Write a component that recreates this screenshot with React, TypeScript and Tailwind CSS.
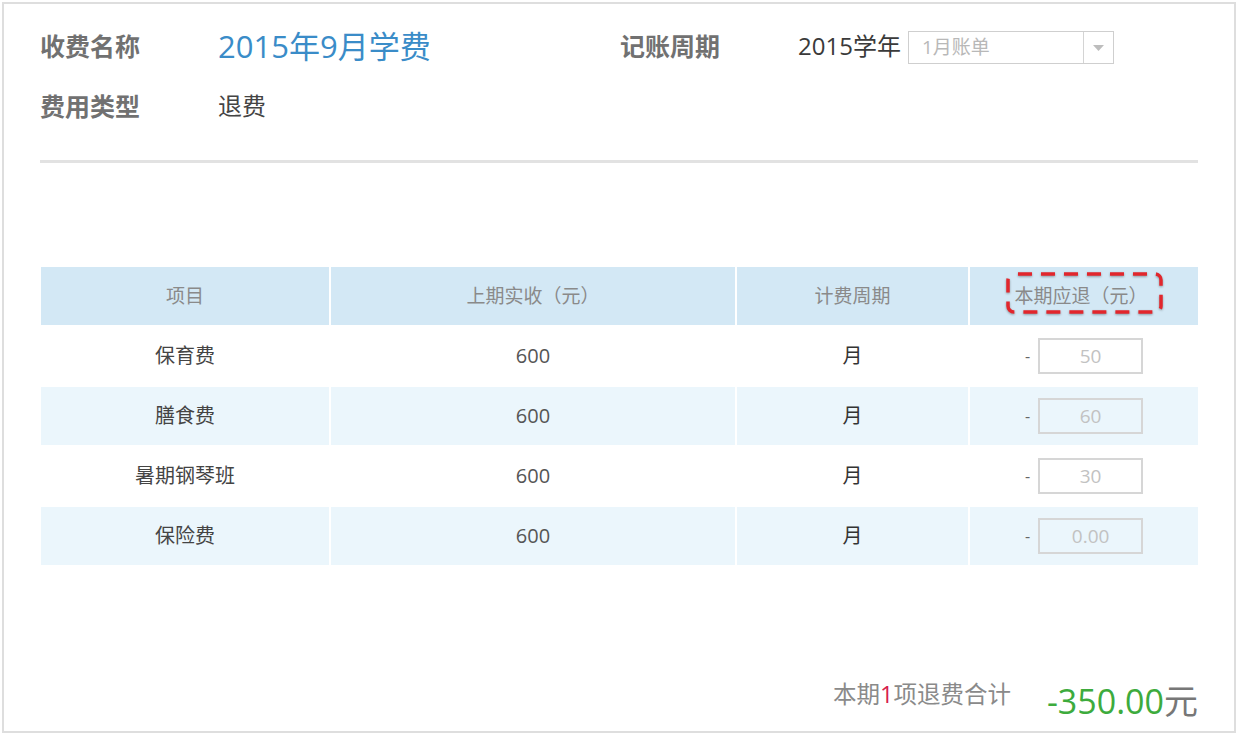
const rows = [
  { name: '保育费', prev: '600', cycle: '月', refund: '50', alt: false },
  { name: '膳食费', prev: '600', cycle: '月', refund: '60', alt: true },
  { name: '暑期钢琴班', prev: '600', cycle: '月', refund: '30', alt: false },
  { name: '保险费', prev: '600', cycle: '月', refund: '0.00', alt: true },
];

export default function App() {
  return (
    <div
      className="w-[1240px] h-[735px] bg-white overflow-hidden"
      style={{ fontFamily: '"Open Sans", "Noto Sans CJK SC", sans-serif' }}
    >
      <div className="ml-[2px] mt-[2px] w-[1234px] h-[731px] border-2 border-[#dedede] px-[36px] pt-[22px] flex flex-col">
        {/* Row 1 */}
        <div className="flex items-center h-[40px]">
          <div className="w-[178px] text-[25px] font-bold text-[#717171] leading-none">收费名称</div>
          <div className="w-[402px] text-[31px] text-[#3a8cc8] leading-none">2015年9月学费</div>
          <div className="w-[178px] text-[25px] font-bold text-[#717171] leading-none">记账周期</div>
          <div className="text-[24px] text-[#3a3a3a] leading-none">2015学年</div>
          <div className="ml-[7px] mt-[3px] w-[206px] h-[33px] border border-[#cfcfcf] flex bg-white">
            <div className="flex-1 pl-[13px] text-[19px] text-[#b8b8b8] flex items-center">1月账单</div>
            <div className="w-[30px] border-l border-[#d4d4d4] flex items-center justify-center">
              <svg width="11" height="6" viewBox="0 0 11 6">
                <path d="M0 0 L11 0 L5.5 6 Z" fill="#bdbdbd" />
              </svg>
            </div>
          </div>
        </div>
        {/* Row 2 */}
        <div className="flex items-center h-[40px] mt-[20px]">
          <div className="w-[178px] text-[25px] font-bold text-[#717171] leading-none">费用类型</div>
          <div className="text-[24px] text-[#444444] leading-none">退费</div>
        </div>
        {/* Divider */}
        <div className="mt-[34px] h-[3px] bg-[#e2e2e2]" />
        {/* Table */}
        <div className="mt-[104px] ml-[1px] grid grid-cols-[288px_404px_231px_228px] gap-[2px]">
          <div className="h-[58px] bg-[#d3e8f5] flex items-center justify-center text-[19px] text-[#8a8a8a]">项目</div>
          <div className="h-[58px] bg-[#d3e8f5] flex items-center justify-center text-[19px] text-[#8a8a8a]">上期实收（元）</div>
          <div className="h-[58px] bg-[#d3e8f5] flex items-center justify-center text-[19px] text-[#8a8a8a]">计费周期</div>
          <div className="h-[58px] bg-[#d3e8f5] flex items-center justify-center text-[19px] text-[#8a8a8a]">
            <div className="relative ml-[-6px] pt-[1px]">
              本期应退（元）
              <svg
                className="absolute left-[-8px] top-[-9px] drop-shadow-[0_1px_1px_rgba(0,0,0,0.35)]"
                width="158"
                height="44"
                viewBox="0 0 158 44"
              >
                <rect
                  x="2"
                  y="2"
                  width="153"
                  height="38"
                  rx="6"
                  fill="none"
                  stroke="#e2262c"
                  strokeWidth="3.5"
                  strokeDasharray="14 9"
                  strokeDashoffset="-4"
                />
              </svg>
            </div>
          </div>
          {rows.map((r) => {
            const bg = r.alt ? 'bg-[#ebf6fc]' : 'bg-white';
            return [
              <div key={r.name + 'a'} className={`h-[58px] ${bg} flex items-center justify-center text-[20px] text-[#444444]`}>{r.name}</div>,
              <div key={r.name + 'b'} className={`h-[58px] ${bg} flex items-center justify-center text-[20px] text-[#555555]`}>{r.prev}</div>,
              <div key={r.name + 'c'} className={`h-[58px] ${bg} flex items-center justify-center text-[20px] text-[#333333]`}>{r.cycle}</div>,
              <div key={r.name + 'd'} className={`h-[58px] ${bg} flex items-center justify-center`}>
                <span className="text-[16px] text-[#666666] mr-[8px]">-</span>
                <div className={`w-[105px] h-[36px] border-2 border-[#d6d6d6] ${bg} flex items-center justify-center text-[19px] text-[#c2c2c2]`}>
                  {r.refund}
                </div>
              </div>,
            ];
          })}
        </div>
        {/* Footer */}
        <div className="mt-[116px] h-[40px] flex items-center justify-end">
          <div className="mb-[12px] text-[23.5px] text-[#8a8a8a] leading-none">
            本期<span className="text-[#d6204b]">1</span>项退费合计
          </div>
          <div className="ml-[36px] text-[34px] leading-none">
            <span className="text-[#3dab3d]">-350.00</span>
            <span className="text-[#777777]">元</span>
          </div>
        </div>
      </div>
    </div>
  );
}
